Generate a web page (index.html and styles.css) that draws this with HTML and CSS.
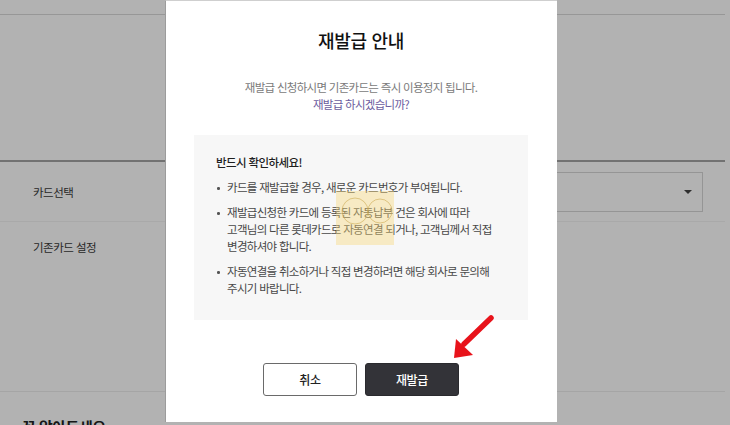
FILE: index.html
```html
<!DOCTYPE html>
<html lang="ko">
<head>
<meta charset="utf-8">
<title>재발급 안내</title>
<link rel="stylesheet" href="styles.css">
</head>
<body>
<div class="page">
  <div class="topbar"></div>
  <div class="intro"></div>
  <div class="row row-select">
    <div class="label">카드선택</div>
    <div class="select"><span class="caret"></span></div>
  </div>
  <div class="row row-base">
    <div class="label">기존카드 설정</div>
  </div>
  <h3 class="notice-title">꼭 알아두세요</h3>
</div>

<div class="dim"></div>

<div class="modal">
  <h2 class="modal-title">재발급 안내</h2>
  <p class="modal-desc">재발급 신청하시면 기존카드는 즉시 이용정지 됩니다.<br><span class="ask">재발급 하시겠습니까?</span></p>
  <div class="info">
    <p class="info-title">반드시 확인하세요!</p>
    <ul class="info-list">
      <li>카드를 재발급할 경우, 새로운 카드번호가 부여됩니다.</li>
      <li>재발급신청한 카드에 등록된 자동납부 건은 회사에 따라<br>고객님의 다른 롯데카드로 자동연결 되거나, 고객님께서 직접<br>변경하셔야 합니다.</li>
      <li>자동연결을 취소하거나 직접 변경하려면 해당 회사로 문의해<br>주시기 바랍니다.</li>
    </ul>
    <div class="stamp">
      <svg width="58" height="54" viewBox="0 0 58 54">
        <circle cx="19" cy="20" r="13" fill="none" stroke="#c9a54a" stroke-width="0.8" opacity="0.7"/>
        <circle cx="44" cy="20" r="12" fill="none" stroke="#c9a54a" stroke-width="0.8" opacity="0.7"/>
      </svg>
    </div>
  </div>
  <div class="actions">
    <button class="btn btn-cancel" type="button">취소</button>
    <button class="btn btn-primary" type="button">재발급</button>
  </div>
</div>

<svg class="arrow" width="60" height="60" viewBox="0 0 60 60">
  <line x1="14" y1="32" x2="41" y2="6" stroke="#e8131b" stroke-width="5.5" stroke-linecap="round"/>
  <polygon points="4,46 6,27 23,43" fill="#e8131b"/>
</svg>
</body>
</html>
```
FILE: styles.css
```css
* { box-sizing: border-box; }
html, body { margin: 0; padding: 0; }
body {
  width: 730px;
  height: 425px;
  overflow: hidden;
  background: #fff;
  font-family: "Noto Sans CJK KR", "Noto Sans", sans-serif;
  color: #222;
  position: relative;
}

/* underlying page */
.page { width: 725px; }
.topbar { height: 15px; border-bottom: 1px solid #d8d8d8; }
.intro { height: 147px; border-bottom: 2px solid #a4a4a4; }
.row {
  display: flex;
  align-items: flex-start;
  border-bottom: 1px solid #f2f2f2;
}
.row-select { height: 60px; align-items: center; }
.row-base { height: 170px; padding-top: 16px; border-bottom-color: #ececec; }
.label {
  width: 175px;
  padding-left: 33px;
  font-size: 11.5px;
  letter-spacing: -0.5px;
  color: #3a3a3a;
  line-height: 18px;
}
.select {
  width: 528px;
  height: 40px;
  border: 1px solid #d6d6d6;
  position: relative;
  display: flex;
  align-items: center;
  justify-content: flex-end;
  padding-right: 10px;
}
.caret {
  width: 0; height: 0;
  border-left: 4px solid transparent;
  border-right: 4px solid transparent;
  border-top: 4px solid #444;
}
.notice-title {
  margin: 0;
  padding: 25px 0 0 22px;
  font-size: 15px;
  font-weight: 700;
  color: #222;
  letter-spacing: -0.5px;
  line-height: 20px;
}

/* dim overlay */
.dim {
  position: absolute;
  inset: 0;
  background: rgba(0, 0, 0, 0.3);
}

/* modal */
.modal {
  position: absolute;
  left: 165px;
  top: 0;
  width: 392px;
  height: 422px;
  background: #fff;
  border-left: 1px solid #9c9c9c;
  border-top: 1px solid #cfcfcf;
  padding: 26px 29px 0 28px;
  display: flex;
  flex-direction: column;
  align-items: stretch;
}
.modal-title {
  margin: 0;
  text-align: center;
  font-size: 18px;
  font-weight: 500;
  letter-spacing: -0.3px;
  line-height: 26px;
  color: #111;
}
.modal-desc {
  margin: 26px 0 0;
  text-align: center;
  font-size: 11.5px;
  line-height: 16.5px;
  letter-spacing: -0.7px;
  color: #7a7a7a;
}
.ask { color: #6b5c9e; }
.info {
  position: relative;
  margin-top: 23px;
  height: 185px;
  background: #f7f7f7;
  padding: 19px 20px 0 22px;
}
.info-title {
  margin: 0 0 8px;
  font-size: 11.5px;
  font-weight: 500;
  letter-spacing: -0.6px;
  line-height: 17px;
  color: #1e1e1e;
}
.info-list {
  list-style: none;
  margin: 0;
  padding: 0;
}
.info-list li {
  position: relative;
  padding-left: 11px;
  margin-bottom: 8px;
  font-size: 11.5px;
  line-height: 17px;
  letter-spacing: -0.7px;
  color: #484848;
  white-space: nowrap;
}
.info-list li::before {
  content: "";
  position: absolute;
  left: 1px;
  top: 8px;
  width: 2.5px;
  height: 2.5px;
  border-radius: 50%;
  background: #555;
}
.stamp {
  position: absolute;
  left: 142px;
  top: 56px;
  width: 58px;
  height: 54px;
  background: rgba(248, 214, 120, 0.4);
}
.stamp svg { display: block; }
.actions {
  display: flex;
  justify-content: center;
  gap: 8px;
  margin-top: 43px;
}
.btn {
  width: 94px;
  height: 33px;
  border-radius: 3px;
  font-family: inherit;
  font-size: 12px;
  letter-spacing: -0.3px;
  cursor: pointer;
}
.btn-cancel {
  background: #fff;
  border: 1px solid #6a6a6a;
  color: #222;
  font-weight: 500;
}
.btn-primary {
  background: #333338;
  border: 1px solid #2a2a2e;
  color: #fff;
  font-weight: 500;
}

/* annotation arrow */
.arrow {
  position: absolute;
  left: 450px;
  top: 312px;
}
```
